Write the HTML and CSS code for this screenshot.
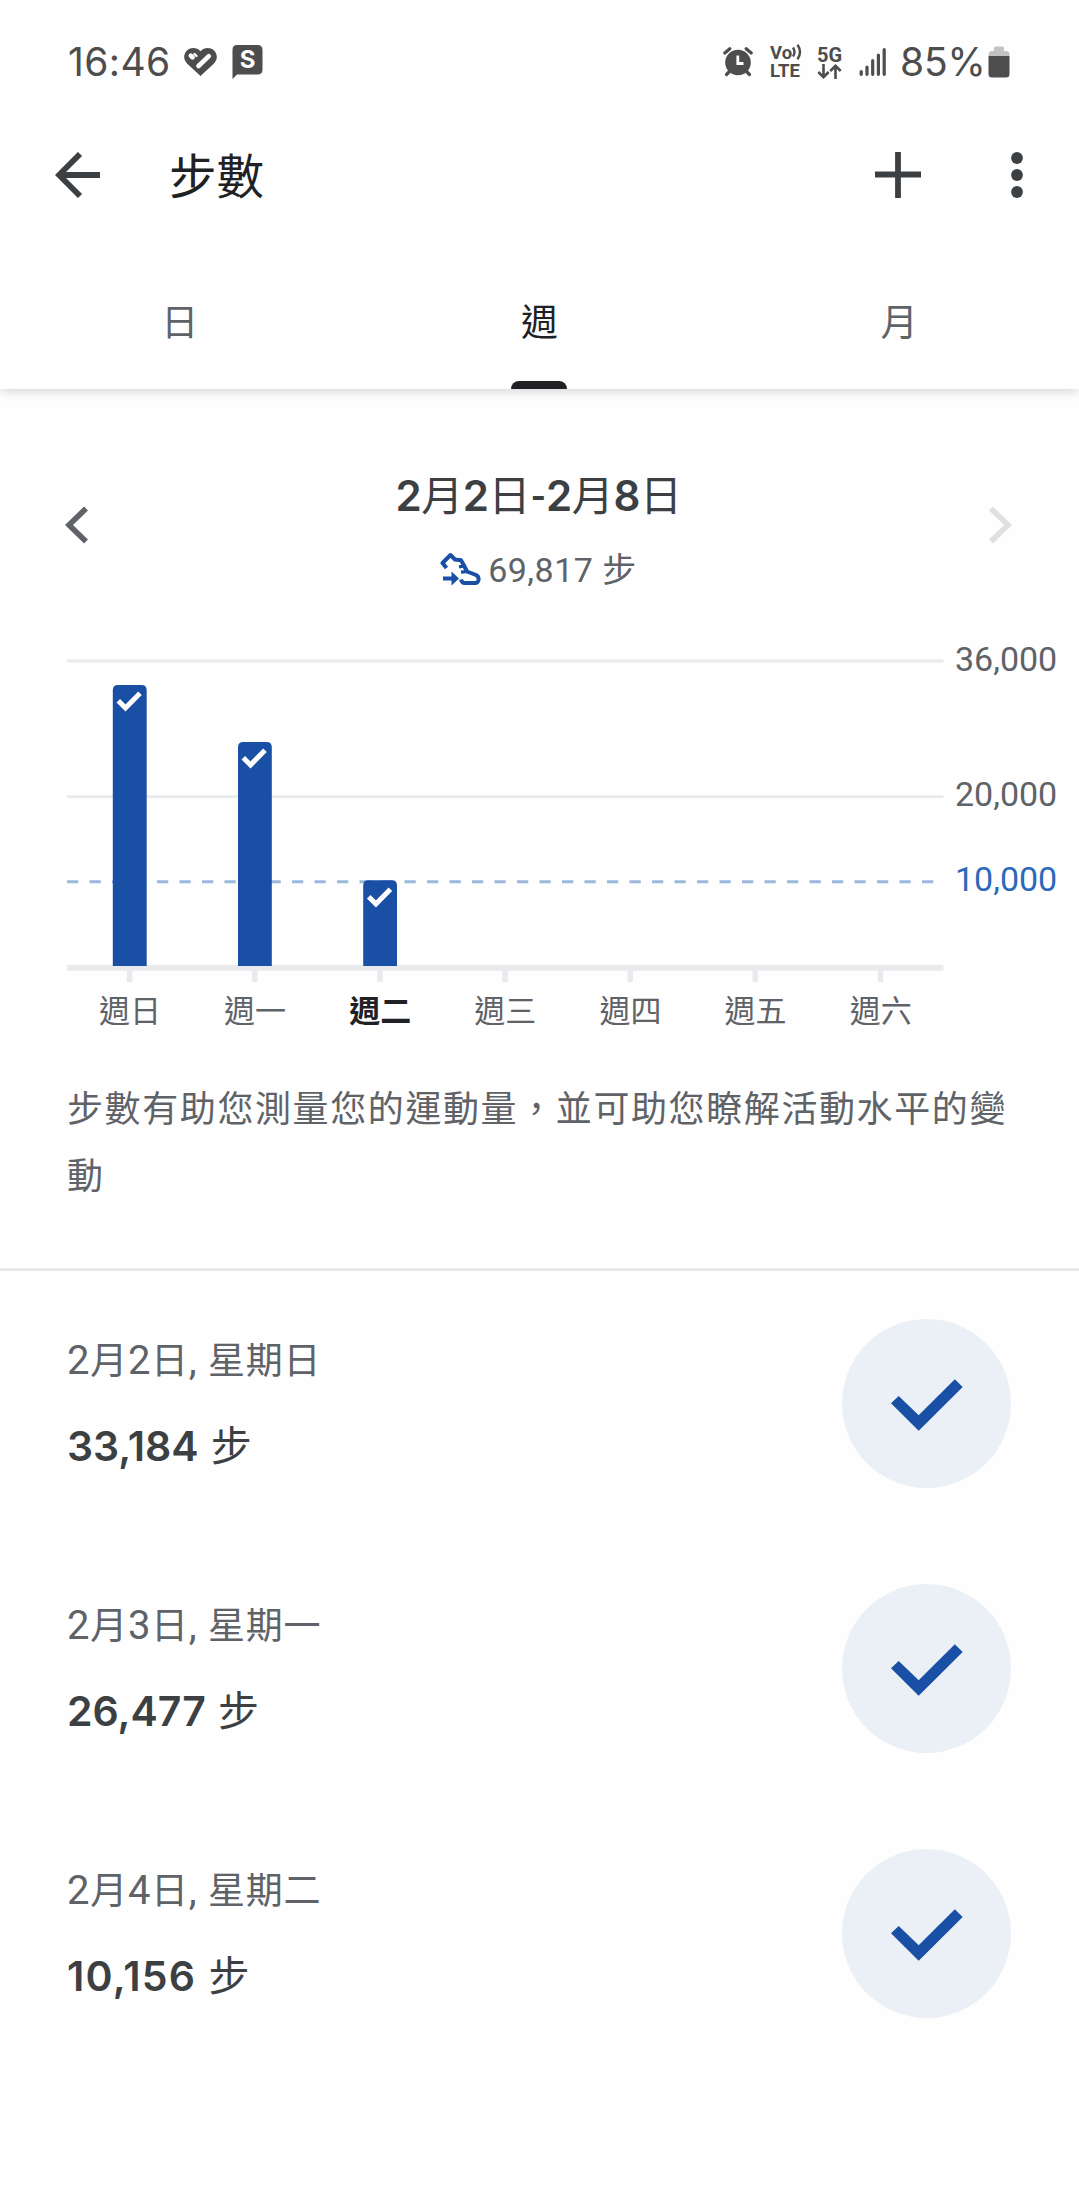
FILE: index.html
```
<!DOCTYPE html>
<html lang="zh-Hant">
<head>
    <meta charset="UTF-8">
    <meta name="viewport" content="width=device-width, initial-scale=1.0">
    <title>步數</title>
    <link rel="stylesheet" href="styles.css">
</head>
<body>
    <div class="status-bar">
        <span class="clock">16:46</span>
        <svg class="icon-heart" width="34" height="30" viewBox="0 0 34 30">
            <path d="M16.500 4.200C20 .2 26 -.2 29.800 3.200C33.800 7 33.800 12.500 30 16.500L16.500 29L3 16.500C-.8 12.500 -.8 7 3.200 3.200C7 -.2 13 .2 16.500 4.200Z" fill="#4d4d4d"/>
            <path d="M6.800 8.600L8.600 10.400M14.500 19L24.800 9.200" fill="none" stroke="#fefefe" stroke-width="4.600" stroke-linecap="round"/>
            <path d="M10.500 7L12.500 9" fill="none" stroke="#fefefe" stroke-width="2.400" stroke-linecap="round"/>
        </svg>
        <span class="icon-s">
            <svg width="31" height="35" viewBox="0 0 31 35"><path d="M5 0H25.500Q30.500 0 30.500 5V24.500Q30.500 29.500 25.500 29.500H5L.5 34V5Q.5 0 5 0Z" fill="#4d4d4d"/></svg>
            <b>S</b>
        </span>
        <div class="status-right">
            <svg class="icon-alarm" width="30" height="30" viewBox="0 0 30 30" fill="none" stroke="#4d4d4d" stroke-linecap="round">
                <circle cx="15" cy="15.500" r="12.800" fill="#4d4d4d" stroke="none"/>
                <path d="M1.800 6L6.800 1.800M28.200 6L23.200 1.800" stroke-width="3.200"/>
                <path d="M7 24L3.500 27.500M23 24L26.500 27.500" stroke-width="3.200"/>
                <path d="M14.800 8.500V16.500H20.500" stroke="#fff" stroke-width="2.800" stroke-linecap="butt"/>
            </svg>
            <div class="volte">
                <div class="vo">Vo<svg width="12" height="16" viewBox="0 0 12 16" fill="none" stroke="#4d4d4d" stroke-width="2.400"><path d="M1 3.500Q4 8 1 12.500M5.500 .8Q10.500 8 5.500 15.200"/></svg></div>
                <div>LTE</div>
            </div>
            <div class="net">
                <div>5G</div>
                <svg width="25" height="15" viewBox="0 0 25 15" fill="none" stroke="#4d4d4d" stroke-width="2.600"><path d="M6.500 0V13M1.300 8L6.500 13.200L11.700 8M18.500 15V2M13.300 7L18.500 1.800L23.700 7"/></svg>
            </div>
            <svg class="icon-signal" width="28" height="30" viewBox="0 0 28 30" stroke="#4d4d4d" stroke-width="3.200" stroke-linecap="round"><path d="M2.200 24.500V27.300M8 20V27.300M13.700 13.500V27.300M19.400 8V27.300M25.200 2.500V27.300"/></svg>
            <span class="battery-text">85%</span>
            <svg class="icon-battery" width="22" height="33" viewBox="0 0 22 33">
                <path d="M6 2Q6 .5 7.500 .5H14.500Q16 .5 16 2V5H18Q21.500 5 21.500 8.500V11H.5V8.500Q.5 5 4 5H6Z" fill="#c2c2c2"/>
                <path d="M.5 10H21.500V28Q21.500 31.500 18 31.500H4Q.5 31.500 .5 28Z" fill="#4d4d4d"/>
            </svg>
        </div>
    </div>

    <div class="app-bar">
        <svg width="46" height="46" viewBox="0 0 46 46" fill="none" stroke="#3c4043" stroke-width="5.800"><path d="M45 23H4M25 2L4 23L25 44"/></svg>
        <h1>步數</h1>
        <svg class="icon-plus" width="46" height="46" viewBox="0 0 46 46" stroke="#3c4043" stroke-width="5.800"><path d="M0 22.500H46M23 0V46"/></svg>
        <svg class="icon-more" width="12" height="46" viewBox="0 0 12 46" fill="#3c4043"><circle cx="6" cy="6" r="5.900"/><circle cx="6" cy="23" r="5.900"/><circle cx="6" cy="40" r="5.900"/></svg>
    </div>

    <div class="tabs">
        <div class="tab">日</div>
        <div class="tab active">週</div>
        <div class="tab">月</div>
    </div>

    <div class="period">
        <svg width="24" height="38" viewBox="0 0 24 38" fill="none" stroke="#5f6368" stroke-width="5.600"><path d="M21 2.500L4 19L21 35.500"/></svg>
        <div class="period-text">
            <div class="period-range"><b>2</b>月<b>2</b>日<i>-</i><b>2</b>月<b>8</b>日</div>
            <div class="period-total">
                <svg width="42" height="35" viewBox="0 0 42 35" fill="none" stroke="#194fa5" stroke-width="4">
                    <path d="M6.500 16L2.500 11L10.500 3L15 7.500L21 8.300L24 13.500L27 19.500L36 23Q39 24.500 38.500 28Q38 31 35 31H24.500Q22 31 21 27.500" stroke-linejoin="round"/>
                    <path d="M19 14.800L25 13.800M21 20.200L28 19.500" stroke-width="3.200"/>
                    <path d="M3 26.500H12" stroke-width="4"/>
                    <path d="M11.500 19.500L19 26.500L11.500 33.500Z" fill="#194fa5" stroke="none"/>
                </svg>
                <span>69,817 步</span>
            </div>
        </div>
        <svg width="24" height="38" viewBox="0 0 24 38" fill="none" stroke="#e0e0e0" stroke-width="5.600"><path d="M3 2.500L20 19L3 35.500"/></svg>
    </div>

    <svg class="chart" width="1079" height="390" viewBox="0 620 1079 390">
        <!-- grid -->
        <g class="grid">
            <path d="M67 661H943.500M67 796.700H943.500" stroke-width="2.800"/>
            <path d="M67 967.900H943.500" stroke-width="5.800"/>
            <path d="M129.600 970V982M254.700 970V982M379.900 970V982M505 970V982M630.200 970V982M755.300 970V982M880.500 970V982" stroke-width="5.600"/>
        </g>
        <path class="goal" d="M67 881.800H934"/>
        <!-- bars -->
        <g class="bars">
            <path d="M112.800 966V690.300Q112.800 685 118 685H141.500Q146.700 685 146.700 690.300V966Z"/>
            <path d="M238 966V747.300Q238 742 243.200 742H266.600Q271.800 742 271.800 747.300V966Z"/>
            <path d="M363.200 966V885.500Q363.200 880.300 368.400 880.300H391.800Q397 880.300 397 885.500V966Z"/>
        </g>
        <g class="ticks">
            <path d="M118.300 700.700L125.500 708L140 693.200"/>
            <path d="M243.300 757.700L250.500 765L265 750.200"/>
            <path d="M368.700 896.700L375.900 904L390.400 889.200"/>
        </g>
        <g class="y-labels">
            <text x="955" y="671.300">36,000</text>
            <text x="955" y="806.300">20,000</text>
            <text x="955" y="891.200" class="goal-label">10,000</text>
        </g>
        <g class="x-labels">
            <text x="129.900" y="1022">週日</text>
            <text x="255" y="1022">週一</text>
            <text x="380.200" y="1022" class="today">週二</text>
            <text x="505.300" y="1022">週三</text>
            <text x="630.500" y="1022">週四</text>
            <text x="755.600" y="1022">週五</text>
            <text x="880.800" y="1022">週六</text>
        </g>
    </svg>

    <p class="description">步數有助您測量您的運動量，並可助您瞭解活動水平的變動</p>

    <div class="records">
        <div class="record">
            <div>
                <div class="record-date"><i>2</i>月<i>2</i>日<i>, </i>星期日</div>
                <div class="record-steps"><b>33,184</b> 步</div>
            </div>
            <div class="badge"><svg width="72" height="52" viewBox="0 0 72 52"><path d="M0 24.300L7.700 16.900L27.700 36.300L63.800 .3L71.700 8L27.700 51.700Z"/></svg></div>
        </div>
        <div class="record">
            <div>
                <div class="record-date"><i>2</i>月<i>3</i>日<i>, </i>星期一</div>
                <div class="record-steps"><b>26,477</b> 步</div>
            </div>
            <div class="badge"><svg width="72" height="52" viewBox="0 0 72 52"><path d="M0 24.300L7.700 16.900L27.700 36.300L63.800 .3L71.700 8L27.700 51.700Z"/></svg></div>
        </div>
        <div class="record">
            <div>
                <div class="record-date"><i>2</i>月<i>4</i>日<i>, </i>星期二</div>
                <div class="record-steps"><b>10,156</b> 步</div>
            </div>
            <div class="badge"><svg width="72" height="52" viewBox="0 0 72 52"><path d="M0 24.300L7.700 16.900L27.700 36.300L63.800 .3L71.700 8L27.700 51.700Z"/></svg></div>
        </div>
    </div>
</body>
</html>
```
FILE: styles.css
```
* {
    box-sizing: border-box;
}

body {
    margin: 0;
    background: #fefefe;
    color: #3c4043;
    font-family: Roboto, 'Noto Sans CJK TC', sans-serif;
}

svg {
    display: block;
    flex: none;
}

/* status bar */
.status-bar {
    display: flex;
    align-items: center;
    height: 110px;
    padding: 14px 69px 0 68px;
    color: #4d4d4d;
}

.clock,
.battery-text {
    font-family: Inter, sans-serif;
    font-weight: 380;
    font-size: 39px;
    line-height: 48px;
}

.clock {
    width: 116px;
    letter-spacing: 0.4px;
}

.icon-s {
    position: relative;
    margin-left: 14px;
}

.icon-s b {
    position: absolute;
    left: 0;
    top: 0;
    width: 31px;
    text-align: center;
    font: 700 24px/30px Inter, sans-serif;
    color: #fff;
}

.status-right {
    display: flex;
    align-items: center;
    margin-left: auto;
}

.volte,
.net {
    font-weight: 700;
    font-size: 18.5px;
    line-height: 18px;
}

.volte {
    width: 32px;
    margin-left: 17px;
}

.vo {
    display: flex;
}

.net {
    width: 26px;
    margin-left: 15px;
    font-size: 20px;
}

.icon-signal {
    margin-left: 16px;
}

.battery-text {
    width: 88px;
    margin-left: 13px;
    letter-spacing: -0.2px;
}

/* app bar */
.app-bar {
    display: flex;
    align-items: center;
    height: 130px;
    padding: 0 56px 0 55px;
}

.app-bar h1 {
    margin: 6px 0 0 68px;
    font-size: 47.5px;
    font-weight: 400;
    line-height: 60px;
    color: #202124;
}

.icon-plus {
    margin-left: auto;
}

.icon-more {
    margin-left: 90px;
}

/* tabs */
.tabs {
    display: flex;
    height: 149px;
    box-shadow: 0 1px 12px rgba(0, 0, 0, 0.2);
    clip-path: inset(0 0 -20px 0);
}

.tab {
    position: relative;
    flex: 1;
    padding-top: 59px;
    text-align: center;
    font-size: 37px;
    line-height: 50px;
    color: #5f6368;
}

.tab.active {
    color: #202124;
}

.tab.active::after {
    content: '';
    position: absolute;
    left: calc(50% - 29px);
    bottom: 0;
    width: 56px;
    height: 8px;
    border-radius: 8px 8px 0 0;
    background: #202124;
}

/* period switcher */
.period {
    display: flex;
    align-items: center;
    justify-content: space-between;
    height: 231px;
    padding: 41px 67px 0 65px;
}

.period-text {
    display: flex;
    flex-direction: column;
    align-items: center;
    padding-top: 10px;
}

.period-range {
    font-size: 42px;
    line-height: 60px;
    letter-spacing: -0.4px;
}

.period-range b {
    font-family: Inter, sans-serif;
    font-weight: 600;
}

.period-range i {
    font-style: normal;
    font-weight: 500;
    margin: 0 1px;
}

.period-total {
    display: flex;
    align-items: center;
    margin-top: 18px;
    font-size: 34px;
    line-height: 50px;
    letter-spacing: 0.5px;
    color: #5f6368;
}

.period-total span {
    margin-left: 6px;
}

/* chart */
.chart {
    overflow: visible;
}

.grid {
    fill: none;
    stroke: #e8eaed;
}

.goal {
    fill: none;
    stroke: #9ab9dd;
    stroke-width: 3;
    stroke-dasharray: 11.25;
}

.bars {
    fill: #194fa5;
}

.ticks {
    fill: none;
    stroke: #fff;
    stroke-width: 5;
}

.y-labels {
    font-size: 34px;
    fill: #5f6368;
}

.goal-label {
    fill: #2a6ab8;
}

.x-labels {
    font-size: 31px;
    text-anchor: middle;
    fill: #5f6368;
}

.today {
    font-weight: 700;
    fill: #202124;
}

.description {
    height: 194px;
    margin: 67px 0 0;
    padding: 0 60px 0 67px;
    border-bottom: 3px solid #e8e8ed;
    font-size: 36px;
    line-height: 67px;
    letter-spacing: 1.6px;
    color: #5f6368;
}

/* daily records */
.record {
    display: flex;
    align-items: center;
    justify-content: space-between;
    height: 265px;
    padding: 0 68px 0 67px;
}

.record-date {
    font-size: 37px;
    line-height: 60px;
    letter-spacing: 0.7px;
    color: #5f6368;
}

.record-date i {
    font-style: normal;
    font-size: 40px;
}

.record-steps {
    margin-top: 24px;
    font-size: 41px;
    line-height: 60px;
    word-spacing: 2px;
}

.record-steps b {
    font-family: Inter, sans-serif;
    font-weight: 600;
}

.record:last-child b {
    letter-spacing: 1.2px;
}

.badge {
    display: flex;
    align-items: center;
    justify-content: center;
    width: 169px;
    height: 169px;
    padding-top: 3px;
    border-radius: 50%;
    background: #ebf0f6;
}

.badge path {
    fill: #194fa5;
}
```
